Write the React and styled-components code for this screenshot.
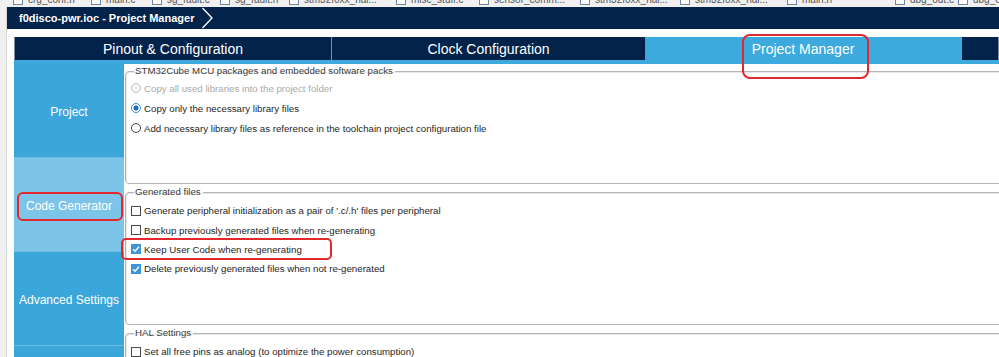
import React from "react";
import styled, { createGlobalStyle } from "styled-components";

const Global = createGlobalStyle`
  html, body { margin: 0; padding: 0; background: #fff; overflow: hidden; }
  body { font-family: "Liberation Sans", Arial, sans-serif; }
  * { box-sizing: border-box; }
`;

const NAVY = "#03234b";
const BLUE = "#3caadc";

const Page = styled.div`
  position: relative;
  width: 999px;
  height: 357px;
  overflow: hidden;
  background: #fff;
`;

const TopStrip = styled.div`
  height: 7px;
  background: #f0f0f0;
  display: flex;
  overflow: hidden;
  padding-left: 13px;
`;

const Stub = styled.div`
  flex: 0 0 ${(p) => p.$w}px;
  display: flex;
  align-items: flex-end;
  gap: 5px;
  height: 7px;
  overflow: hidden;
`;

const StubIcon = styled.span`
  flex: none;
  width: 10px;
  height: 12px;
  margin-bottom: 2px;
  border: 1px solid #6d86aa;
  background: #fdfdfd;
`;

const StubText = styled.span`
  font-size: 10px;
  line-height: 10px;
  color: #555;
  white-space: nowrap;
  margin-bottom: 2px;
`;

const Body = styled.div`
  display: flex;
  height: 350px;
`;

const Gutter = styled.div`
  flex: none;
  width: 7px;
  background: #f0f0f0;
  border-right: 1px solid #d6d6d6;
`;

const Main = styled.div`
  flex: 1;
  min-width: 0;
  display: flex;
  flex-direction: column;
`;

const NavBar = styled.div`
  flex: none;
  height: 22px;
  background: ${NAVY};
  display: flex;
  align-items: center;
  padding-left: 12px;
  gap: 7px;
`;

const Crumb = styled.span`
  color: #fff;
  font-weight: bold;
  font-size: 11px;
  white-space: nowrap;
`;

const Workspace = styled.div`
  flex: 1;
  display: flex;
  flex-direction: column;
  padding: 8px 0 0 7px;
  min-height: 0;
`;

const TabBar = styled.div`
  flex: none;
  height: 27px;
  display: flex;
  background: ${BLUE};
`;

const Tab = styled.div`
  flex: ${(p) => (p.$w ? `0 0 ${p.$w}px` : "1")};
  height: 23px;
  display: flex;
  align-items: center;
  justify-content: center;
  font-size: 14px;
  color: #fff;
  white-space: nowrap;
  background: ${(p) => (p.$active ? "transparent" : NAVY)};
  border-right: 1px solid ${(p) => (p.$active ? "transparent" : "#7e8da3")};
  border-left: ${(p) => (p.$edge ? "1px solid #7e8da3" : "0")};
`;

const Split = styled.div`
  flex: 1;
  display: flex;
  min-height: 0;
`;

const Sidebar = styled.div`
  flex: none;
  width: 110px;
  display: flex;
  flex-direction: column;
`;

const SideItem = styled.div`
  flex: none;
  height: 94px;
  display: flex;
  align-items: center;
  justify-content: center;
  padding-top: 2px;
  font-size: 12px;
  color: #fff;
  white-space: nowrap;
  background: ${(p) => (p.$active ? "#7dc5e8" : "#3aa6da")};
  border-bottom: 1px solid #6cbbe4;
`;

const Panel = styled.div`
  flex: 1;
  min-width: 0;
  overflow: hidden;
  padding-left: 1px;
  display: flex;
  flex-direction: column;
`;

const Group = styled.fieldset`
  flex: none;
  width: 890px;
  height: ${(p) => p.$h}px;
  margin: ${(p) => p.$mt}px 0 0 0;
  padding: ${(p) => p.$pt}px 0 0 5px;
  border: 1px solid #b2b6bb;
  border-radius: 4px;
  box-shadow: inset 1px 1px 0 #e8e8e8;
`;

const Legend = styled.legend`
  font-size: 9.7px;
  line-height: 12px;
  color: #3a3a3a;
  padding: 0 2px 0 1px;
  margin-left: 3px;
`;

const Row = styled.div`
  display: flex;
  align-items: center;
  gap: 3px;
  height: ${(p) => p.$h}px;
  font-size: 9.7px;
  color: ${(p) => (p.$disabled ? "#a9a9a9" : "#262626")};
  white-space: nowrap;
`;

const Radio = styled.span`
  flex: none;
  width: 10px;
  height: 10px;
  border-radius: 50%;
  border: 1px solid
    ${(p) => (p.$disabled ? "#c4c4c4" : p.$checked ? "#3b8fd4" : "#4a4a4a")};
  background: ${(p) =>
    p.$checked
      ? "radial-gradient(circle, #1b6dbf 0 2.2px, #ffffff 2.8px)"
      : p.$disabled
      ? "#f3f3f3"
      : "#fff"};
`;

const Box = styled.span`
  flex: none;
  width: 10px;
  height: 10px;
  display: flex;
  align-items: center;
  justify-content: center;
  border: 1px solid ${(p) => (p.$checked ? "#3b93da" : "#4a4a4a")};
  background: ${(p) => (p.$checked ? "#3e96dc" : "#fff")};
`;

const Mark = styled.div`
  position: absolute;
  left: ${(p) => p.$x}px;
  top: ${(p) => p.$y}px;
  width: ${(p) => p.$w}px;
  height: ${(p) => p.$h}px;
  border: 2px solid #e3282b;
  border-radius: ${(p) => p.$r}px;
  pointer-events: none;
`;

const stubs = [
  [78, "crg_conf.h"],
  [61, "main.c"],
  [68, "sg_fault.c"],
  [69, "sg_fault.h"],
  [107, "stm32f0xx_hal..."],
  [83, "misc_stuff.c"],
  [101, "sensor_comm..."],
  [100, "stm32f0xx_hal..."],
  [107, "stm32f0xx_hal..."],
  [108, "main.h"],
  [63, "dbg_out.c"],
  [60, "dbg_o"],
];

const Check = () => (
  <svg width="8" height="8" viewBox="0 0 8 8">
    <path d="M1 4.2 L3.1 6.2 L7 1.6" fill="none" stroke="#fff" strokeWidth="1.4" />
  </svg>
);

const RadioRow = ({ checked, disabled, children }) => (
  <Row $h={20} $disabled={disabled}>
    <Radio $checked={checked} $disabled={disabled} />
    {children}
  </Row>
);

const CheckRow = ({ checked, h = 19.4, children }) => (
  <Row $h={h}>
    <Box $checked={checked}>{checked && <Check />}</Box>
    {children}
  </Row>
);

export default function App() {
  return (
    <Page>
      <Global />
      <TopStrip>
        {stubs.map(([w, t], i) => (
          <Stub key={i} $w={w}>
            <StubIcon />
            <StubText>{t}</StubText>
          </Stub>
        ))}
      </TopStrip>
      <Body>
        <Gutter />
        <Main>
          <NavBar>
            <Crumb>f0disco-pwr.ioc - Project Manager</Crumb>
            <svg width="12" height="22" viewBox="0 0 12 22">
              <path d="M1.5 1 L11 11 L1.5 21" fill="none" stroke="#fff" strokeWidth="1.3" />
            </svg>
          </NavBar>
          <Workspace>
            <TabBar>
              <Tab $w={318} $edge>Pinout &amp; Configuration</Tab>
              <Tab $w={314}>Clock Configuration</Tab>
              <Tab $w={315} $active>Project Manager</Tab>
              <Tab $edge />
            </TabBar>
            <Split>
              <Sidebar>
                <SideItem>Project</SideItem>
                <SideItem $active>Code Generator</SideItem>
                <SideItem>Advanced Settings</SideItem>
                <SideItem />
              </Sidebar>
              <Panel>
                <Group $h={119} $mt={1} $pt={1}>
                  <Legend>STM32Cube MCU packages and embedded software packs</Legend>
                  <RadioRow disabled>Copy all used libraries into the project folder</RadioRow>
                  <RadioRow checked>Copy only the necessary library files</RadioRow>
                  <RadioRow>
                    Add necessary library files as reference in the toolchain project configuration file
                  </RadioRow>
                </Group>
                <Group $h={139} $mt={2} $pt={3}>
                  <Legend>Generated files</Legend>
                  <CheckRow>
                    Generate peripheral initialization as a pair of '.c/.h' files per peripheral
                  </CheckRow>
                  <CheckRow>Backup previously generated files when re-generating</CheckRow>
                  <CheckRow checked>Keep User Code when re-generating</CheckRow>
                  <CheckRow checked>Delete previously generated files when not re-generated</CheckRow>
                </Group>
                <Group $h={120} $mt={2} $pt={3}>
                  <Legend>HAL Settings</Legend>
                  <CheckRow>Set all free pins as analog (to optimize the power consumption)</CheckRow>
                </Group>
              </Panel>
            </Split>
          </Workspace>
        </Main>
      </Body>
      <Mark $x={742} $y={34} $w={127} $h={45} $r={8} />
      <Mark $x={17} $y={192} $w={106} $h={29} $r={6} />
      <Mark $x={121} $y={238} $w={211} $h={22} $r={5} />
    </Page>
  );
}
